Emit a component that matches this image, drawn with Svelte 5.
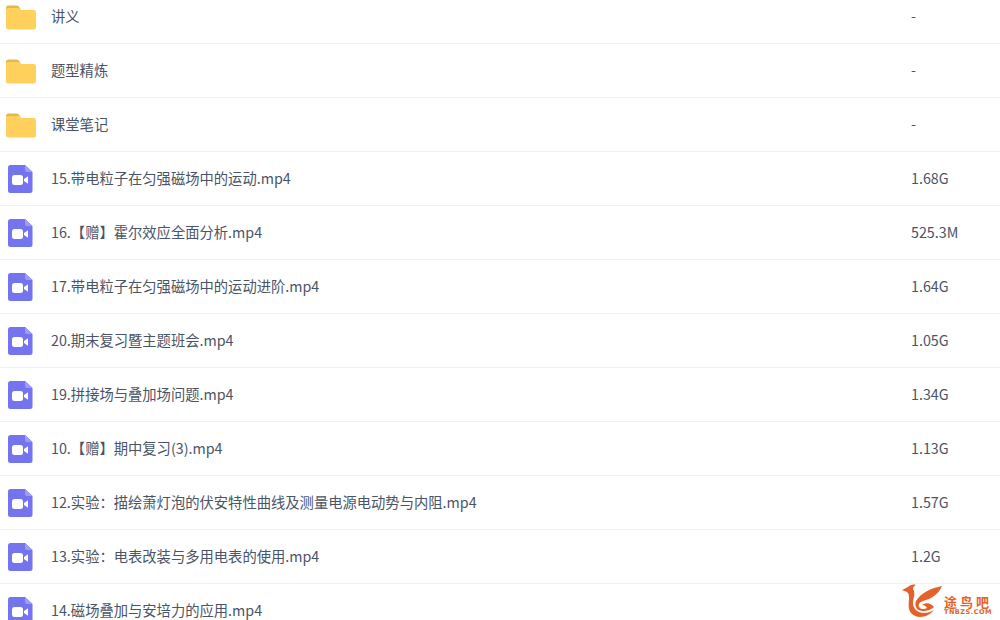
<script>
  const rows = [
    { name: '讲义', size: '-', type: 'folder' },
    { name: '题型精炼', size: '-', type: 'folder' },
    { name: '课堂笔记', size: '-', type: 'folder' },
    { name: '15.带电粒子在匀强磁场中的运动.mp4', size: '1.68G', type: 'video' },
    { name: '16.【赠】霍尔效应全面分析.mp4', size: '525.3M', type: 'video' },
    { name: '17.带电粒子在匀强磁场中的运动进阶.mp4', size: '1.64G', type: 'video' },
    { name: '20.期末复习暨主题班会.mp4', size: '1.05G', type: 'video' },
    { name: '19.拼接场与叠加场问题.mp4', size: '1.34G', type: 'video' },
    { name: '10.【赠】期中复习(3).mp4', size: '1.13G', type: 'video' },
    { name: '12.实验：描绘萧灯泡的伏安特性曲线及测量电源电动势与内阻.mp4', size: '1.57G', type: 'video' },
    { name: '13.实验：电表改装与多用电表的使用.mp4', size: '1.2G', type: 'video' },
    { name: '14.磁场叠加与安培力的应用.mp4', size: '', type: 'video' }
  ];
</script>

<div class="page">
  <ul class="list">
    {#each rows as row}
      <li class="row">
        <span class="icon">
          {#if row.type === 'folder'}
            <svg width="32" height="26" viewBox="-2 0 32 26">
              <path d="M0 4Q0 1.500 2.500 1.500H10.500Q12.500 1.500 13.500 3.500L14.500 5H0Z" fill="#e5b64a" />
              <path d="M0 5.500Q0 4 2 4H13.500L15 6H28Q30 6 30 8.500V23Q30 25.500 28 25.500H2.500Q0 25.500 0 23Z" fill="#ffd05c" />
            </svg>
          {:else}
            <svg width="26" height="30" viewBox="0 0 26 30">
              <path d="M3.500 1H18L25.500 8V26.500Q25.500 29 23 29H3.500Q1 29 1 26.500V3.500Q1 1 3.500 1Z" fill="#7475ee" />
              <path d="M18 1L25.500 8H20Q18 8 18 6Z" fill="#9c9df3" />
              <rect x="5" y="11" width="11" height="10" rx="2.500" fill="#fff" />
              <path d="M17 15L21 12.200V19.800L17 17Z" fill="#fff" />
            </svg>
          {/if}
        </span>
        <span class="name">{row.name}</span>
        {#if row.size}
          <span class="size">{row.size}</span>
        {/if}
      </li>
    {/each}
  </ul>

  <div class="logo">
    <svg class="mark" width="42" height="36" viewBox="0 0 42 36">
      <path d="M0 6C2 5 4 4 6 3C8 1 11 0 14 1C12 2 11 3 11 5C14 9 11 15 11 19C11 25 16 29 22 29C25 29 29 28 32 26C27 33 15 36 9 29C4 23 9 14 6 9C4 7 2 7 0 6Z" fill="#e4622a" />
      <path d="M14 17C19 9 29 4 40 2C37 10 29 15 21 17C18 18 16 20 17 23C18 25 22 26 25 24C24 22 22 21 20 21C24 18 29 19 32 23C27 28 19 28 15 25C13 22 13 19 14 17Z" fill="#e4622a" />
    </svg>
    <div class="brand">
      <span class="cn">途鸟吧</span>
      <span class="en">TNBZS.COM</span>
    </div>
  </div>
</div>

<style>
  :global(body) {
    margin: 0;
    background: #fff;
  }
  .page {
    position: relative;
    width: 1000px;
    height: 620px;
    overflow: hidden;
    font-family: "Noto Sans CJK SC", "Liberation Sans", sans-serif;
    color: #4a5468;
    font-size: 14.3px;
  }
  .list {
    list-style: none;
    margin: -10px 0 0;
    padding: 0;
  }
  .row {
    box-sizing: border-box;
    display: flex;
    align-items: center;
    height: 54px;
    border-bottom: 1px solid #f2f2f4;
    line-height: 20px;
  }
  .icon {
    display: flex;
    justify-content: center;
    width: 40px;
    flex: none;
    margin-right: 11px;
  }
  .icon svg {
    display: block;
  }
  .name {
    flex: 1;
    margin-bottom: 2px;
  }
  .size {
    width: 89px;
    flex: none;
    margin-bottom: 2px;
  }
  .logo {
    position: absolute;
    left: 902px;
    top: 584px;
    display: flex;
    color: #e4622a;
  }
  .mark {
    flex: none;
  }
  .brand {
    display: flex;
    flex-direction: column;
    margin-top: 11px;
    line-height: 1;
  }
  .cn {
    font-size: 13px;
    letter-spacing: 3px;
    font-weight: 700;
  }
  .en {
    font-family: "DejaVu Sans", sans-serif;
    font-size: 6.500px;
    font-weight: 700;
    letter-spacing: 0.500px;
    margin-top: 1px;
  }
</style>
